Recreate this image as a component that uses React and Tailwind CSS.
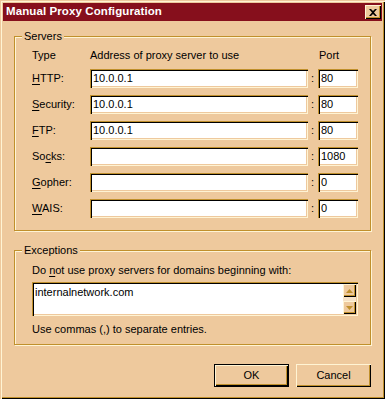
import React from "react";

const sunken =
  "shadow-[inset_1px_1px_0_#c0902c,inset_2px_2px_0_#000,inset_-1px_-1px_0_#fff4d4,inset_-2px_-2px_0_#eec99d]";
const raised =
  "shadow-[inset_1px_1px_0_#fff4d4,inset_-1px_-1px_0_#000,inset_-2px_-2px_0_#c0902c]";

const rows = [
  { pre: "", key: "H", post: "TTP:", addr: "10.0.0.1", port: "80" },
  { pre: "", key: "S", post: "ecurity:", addr: "10.0.0.1", port: "80" },
  { pre: "", key: "F", post: "TP:", addr: "10.0.0.1", port: "80" },
  { pre: "So", key: "c", post: "ks:", addr: "", port: "1080" },
  { pre: "", key: "G", post: "opher:", addr: "", port: "0" },
  { pre: "", key: "W", post: "AIS:", addr: "", port: "0" },
];

const GroupBox = ({ title, className, children }) => (
  <div
    className={`relative border border-[#c0902c] shadow-[1px_1px_0_#fff4d4,inset_1px_1px_0_#fff4d4] ${className}`}
  >
    <span className="absolute -top-[8px] left-[7px] bg-[#eec99d] px-[2px] leading-[14px]">
      {title}
    </span>
    {children}
  </div>
);

const Field = ({ value, className }) => (
  <div className={`h-[19px] bg-white ${sunken} pl-[3px] pt-[3px] leading-[13px] ${className}`}>
    {value}
  </div>
);

export default function App() {
  return (
    <div className="w-[385px] h-[399px] bg-[#eec99d] p-[3px] flex flex-col text-[11px] text-black font-['Liberation_Sans',Arial,sans-serif] shadow-[inset_1px_1px_0_#eec99d,inset_2px_2px_0_#fff4d4,inset_-1px_-1px_0_#000,inset_-2px_-2px_0_#c0902c]">
      {/* title bar */}
      <div className="h-[18px] bg-[#860f1c] flex items-center justify-between pl-[3px] pr-[1px]">
        <span className="text-white font-bold text-[11.5px] tracking-[0.1px]">
          Manual Proxy Configuration
        </span>
        <div className={`w-[16px] h-[14px] bg-[#eec99d] ${raised} flex items-center justify-center`}>
          <svg width="8" height="7" viewBox="0 0 8 7">
            <path d="M0 0h2l2 2 2-2h2L5 3.5 8 7H6L4 5 2 7H0l3-3.5z" fill="#000" />
          </svg>
        </div>
      </div>

      <div className="flex flex-col px-[11px] pt-[15px]">
        <GroupBox title="Servers" className="pl-[17px] pt-[12px] pb-[12px]">
          <div className="grid grid-cols-[58px_218px_10px_40px] gap-y-[7px] items-center">
            <span className="leading-[13px]">Type</span>
            <span className="leading-[13px]">Address of proxy server to use</span>
            <span />
            <span className="leading-[13px] pl-[1px]">Port</span>
            {rows.map((r) => (
              <React.Fragment key={r.post}>
                <span>
                  {r.pre}
                  <span className="underline underline-offset-2">{r.key}</span>
                  {r.post}
                </span>
                <Field value={r.addr} />
                <span className="text-center pr-[1px]">:</span>
                <Field value={r.port} className="pl-[2px]" />
              </React.Fragment>
            ))}
          </div>
        </GroupBox>

        <GroupBox title="Exceptions" className="mt-[19px] pl-[17px] pr-[12px] pt-[13px] pb-[8px]">
          <div className="leading-[13px]">
            Do <span className="underline underline-offset-2">n</span>ot use proxy servers for
            domains beginning with:
          </div>
          <div className={`mt-[5px] h-[34px] bg-white ${sunken} flex`}>
            <div className="flex-1 pl-[3px] pt-[4px] leading-[13px]">internalnetwork.com</div>
            <div className="w-[13px] flex flex-col justify-between my-[2px] mr-[2px] bg-[#f6e2c8]">
              <div className={`h-[13px] bg-[#eec99d] ${raised} flex items-center justify-center`}>
                <svg width="7" height="4" viewBox="0 0 7 4">
                  <path d="M3.5 0L7 4H0z" fill="#c0902c" />
                </svg>
              </div>
              <div className={`h-[13px] bg-[#eec99d] ${raised} flex items-center justify-center`}>
                <svg width="7" height="4" viewBox="0 0 7 4">
                  <path d="M0 0h7L3.5 4z" fill="#c0902c" />
                </svg>
              </div>
            </div>
          </div>
          <div className="mt-[7px] leading-[13px]">Use commas (,) to separate entries.</div>
        </GroupBox>

        <div className="flex justify-end gap-[7px] mt-[19px]">
          <button className="w-[75px] h-[23px] border border-black bg-[#eec99d] p-0">
            <div className={`w-full h-full ${raised} flex items-center justify-center`}>OK</div>
          </button>
          <button className={`w-[75px] h-[23px] bg-[#eec99d] ${raised} flex items-center justify-center`}>
            Cancel
          </button>
        </div>
      </div>
    </div>
  );
}
